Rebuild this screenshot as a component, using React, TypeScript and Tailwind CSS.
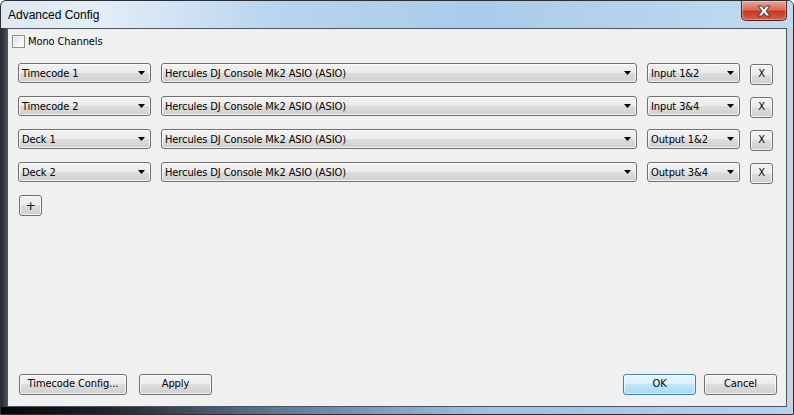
import React from 'react';

const font = {
  fontFamily: '"DejaVu Sans", "Liberation Sans", Arial, sans-serif',
  fontStretch: 'condensed',
};

const ComboBox: React.FC<{ label: string; width: string }> = ({ label, width }) => (
  <div
    className={`${width} h-[20px] shrink-0 flex items-center justify-between rounded-[3px] border border-[#707070] bg-[linear-gradient(180deg,#f2f2f2_0%,#ebebeb_50%,#dddddd_50%,#cfcfcf_100%)] shadow-[inset_0_0_0_1px_rgba(255,255,255,0.75)] pl-[3px] pr-[4px] text-[11px] tracking-[-0.1px] text-black`}
  >
    <span className="leading-none whitespace-nowrap">{label}</span>
    <svg width="7" height="4" viewBox="0 0 7 4" className="mr-[1px] shrink-0">
      <path d="M0 0H7L3.5 4Z" fill="#000" />
    </svg>
  </div>
);

const Button: React.FC<{ label: string; width: string; primary?: boolean; className?: string }> = ({
  label,
  width,
  primary,
  className = '',
}) => (
  <div
    className={`${width} h-[21px] shrink-0 flex items-center justify-center rounded-[3px] border text-[11px] tracking-[-0.1px] text-black ${
      primary
        ? 'border-[#3c7fb1] bg-[linear-gradient(180deg,#eaf6fd_0%,#d9f0fc_50%,#bee6fd_50%,#a7d9f5_100%)] shadow-[inset_0_0_0_1px_rgba(255,255,255,0.6)]'
        : 'border-[#707070] bg-[linear-gradient(180deg,#f2f2f2_0%,#ebebeb_50%,#dddddd_50%,#cfcfcf_100%)] shadow-[inset_0_0_0_1px_rgba(255,255,255,0.75)]'
    } ${className}`}
  >
    {label}
  </div>
);

const rows = [
  { name: 'Timecode 1', device: 'Hercules DJ Console Mk2 ASIO (ASIO)', ch: 'Input 1&2' },
  { name: 'Timecode 2', device: 'Hercules DJ Console Mk2 ASIO (ASIO)', ch: 'Input 3&4' },
  { name: 'Deck 1', device: 'Hercules DJ Console Mk2 ASIO (ASIO)', ch: 'Output 1&2' },
  { name: 'Deck 2', device: 'Hercules DJ Console Mk2 ASIO (ASIO)', ch: 'Output 3&4' },
];

export default function App() {
  return (
    <div
      style={font}
      className="w-[794px] h-[415px] flex flex-col overflow-hidden rounded-t-[6px] border border-[#2b2f33] bg-[linear-gradient(90deg,#262a2e_0px,#5a6168_9px,#a9b3bc_70%,#c7d3de_100%)]"
    >
      {/* title bar */}
      <div className="h-[27px] shrink-0 flex items-start justify-between bg-[linear-gradient(90deg,#dde8f2_0%,#e4eef7_12%,#b8d4ef_35%,#a9cbea_60%,#c2daf0_100%)]">
        <div
          className="pl-[7px] pt-[8px] text-[12px] leading-none text-black"
          style={{ fontFamily: '"Liberation Sans", Arial, sans-serif', fontStretch: 'normal' }}
        >
          Advanced Config
        </div>
        <div className="mr-[6px] w-[46px] h-[20px] flex items-center justify-center rounded-b-[5px] border border-t-0 border-[#5c1f14] bg-[linear-gradient(180deg,#e9a99b_0%,#d86b54_45%,#c23a1e_55%,#d2614a_100%)] shadow-[inset_0_0_0_1px_rgba(255,255,255,0.35)]">
          <svg width="16" height="12" viewBox="0 0 16 12">
            <path
              d="M2 1H6L8 4L10 1H14L10 6L14 11H10L8 8L6 11H2L6 6Z"
              fill="#fff"
              stroke="#3a3a3a"
              strokeWidth="1"
              strokeLinejoin="round"
            />
          </svg>
        </div>
      </div>

      {/* client area */}
      <div className="flex-1 mx-[6px] flex flex-col border border-[#4d5560] bg-[#f0f0f0]">
        <div className="pt-[5px] pl-[4px] flex items-center gap-[3px] h-[19px]">
          <div className="w-[13px] h-[13px] border border-[#8e8f8f] bg-[linear-gradient(135deg,#dcdcdc_0%,#f5f5f5_60%,#ffffff_100%)] shadow-[inset_0_0_0_1px_#f4f4f4]" />
          <span className="text-[11px] tracking-[-0.1px] text-black leading-none">Mono Channels</span>
        </div>

        <div className="mt-[15px] px-[10px] flex flex-col gap-[13px]">
          {rows.map((r) => (
            <div key={r.name} className="flex items-start gap-[10px] h-[20px]">
              <ComboBox label={r.name} width="w-[133px]" />
              <ComboBox label={r.device} width="w-[476px]" />
              <ComboBox label={r.ch} width="w-[93px]" />
              <Button label="X" width="w-[23px]" className="mt-[1px]" />
            </div>
          ))}
          <Button label="+" width="w-[23px]" className="ml-[1px] text-[13px]" />
        </div>

        <div className="mt-auto mb-[11px] pl-[11px] pr-[9px] flex items-center">
          <Button label="Timecode Config..." width="w-[108px]" />
          <Button label="Apply" width="w-[73px]" className="ml-[12px]" />
          <div className="flex-1" />
          <Button label="OK" width="w-[73px]" primary />
          <Button label="Cancel" width="w-[73px]" className="ml-[8px]" />
        </div>
      </div>

      {/* bottom frame */}
      <div className="h-[7px] shrink-0 bg-[linear-gradient(90deg,#050607_0%,#1b1f23_12%,#5e7a94_35%,#9cbfe0_60%,#b6d3ef_100%)]" />
    </div>
  );
}
